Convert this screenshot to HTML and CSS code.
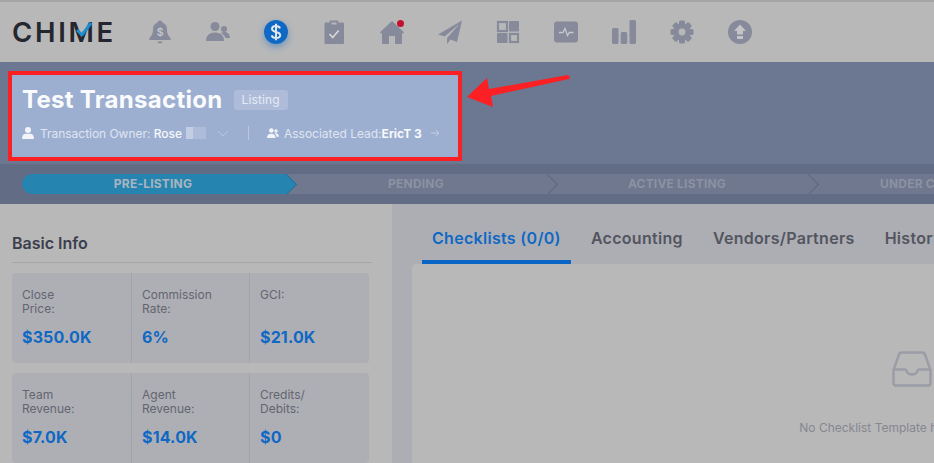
FILE: index.html
```html
<!DOCTYPE html>
<html lang="en">
<head>
    <meta charset="UTF-8">
    <meta name="viewport" content="width=device-width, initial-scale=1.0">
    <title>Test Transaction</title>
    <link rel="stylesheet" href="styles.css">
</head>
<body>
    <header class="topbar">
        <div class="logo">
            <span class="logo-text">CHIME</span>
            <svg class="logo-check" viewBox="0 0 16 14"><path d="M3 0 L8 11 L13 0z" fill="#b8b8b8"/><path d="M1 8 L6 13 L15 1" fill="none" stroke="#1c8ed0" stroke-width="3"/></svg>
        </div>
        <nav class="nav">
            <!-- bell -->
            <svg class="nav-icon" viewBox="0 0 24 24"><path d="M12 .5c-1.500 0-2.500 1-2.500 2.300C6 4 5 6.500 5 9.500c0 4.500-1.500 6.500-3.500 8.500-.8.8-.4 2 .8 2h19.400c1.200 0 1.600-1.200.8-2-2-2-3.500-4-3.500-8.500 0-3-1-5.500-4.500-6.700C14.500 1.500 13.500.5 12 .5z"/><path d="M9.500 21.500h5c0 1.200-1.100 2-2.500 2s-2.500-.8-2.500-2z"/><text x="12" y="15.500" class="bell-dollar">$</text></svg>
            <!-- people -->
            <svg class="nav-icon" viewBox="0 0 24 24"><circle cx="9" cy="6.500" r="4.500"/><path d="M0 21c0-5 3-8.500 9-8.500s9 3.500 9 8.500z"/><circle cx="18" cy="9" r="3"/><path d="M15 13c1-.6 2-.9 3.200-.9 3.300 0 5.800 2.400 5.800 5.900h-4.500c-.4-2-2.300-4-4.500-5z"/></svg>
            <!-- money, active -->
            <span class="nav-active"><svg viewBox="0 0 24 24"><circle cx="12" cy="12" r="12" fill="#0f68c4"/><path d="M16 8.300c-.6-1.500-2.100-2.200-4-2.200-2.300 0-4 1.100-4 3 0 4 8.200 1.800 8.200 5.900 0 1.900-1.800 3-4.200 3-2.200 0-3.800-.9-4.400-2.600M12 3.800v16.400" fill="none" stroke="#dfe6ee" stroke-width="2"/></svg></span>
            <!-- clipboard -->
            <svg class="nav-icon" viewBox="0 0 24 24"><path d="M3.500 2.500h4.200v-1c0-.6.400-1 1-1h6.600c.6 0 1 .4 1 1v1h4.200c1 0 1.500.6 1.500 1.500v18.500c0 1-.5 1.500-1.500 1.500h-16.500c-1 0-1.500-.5-1.500-1.500V4c0-.9.500-1.500 1.500-1.500z"/><path d="M9.500 2.500h5v2h-5z" fill="#b8b8b8"/><path d="M7.500 14l3.200 3.500 6-7" fill="none" stroke="#d6d6d8" stroke-width="1.800"/></svg>
            <!-- home -->
            <span class="nav-dot-wrap">
                <svg class="nav-icon" viewBox="0 0 24 24"><path d="M12 1 L24 12.300 L22.800 13.700 L22 13 V23 c0 .6-.4 1-1 1 h-6 v-8 h-6 v8 h-6 c-.6 0-1-.4-1-1 V13 L1.200 13.700 L0 12.300z"/></svg>
                <span class="nav-dot"></span>
            </span>
            <!-- paper plane -->
            <svg class="nav-icon" viewBox="0 0 24 24"><path d="M24 .5 L0 14.500 L6.500 16.500 L22 3.500 L9 18 L9 24 L12.500 19.500 L19 22z"/></svg>
            <!-- dashboard -->
            <svg class="nav-icon" viewBox="0 0 24 24"><rect x="2" y="2" width="9" height="9" fill="none" stroke="#868a9b" stroke-width="2.200"/><rect x="13" y="1" width="10" height="10.500" rx="1"/><rect x="1" y="13" width="10.500" height="10" rx="1"/><rect x="14" y="14" width="8" height="8" fill="none" stroke="#868a9b" stroke-width="2.200"/></svg>
            <!-- pulse -->
            <svg class="nav-icon" viewBox="0 0 24 24"><rect x="0" y="1.500" width="24" height="21" rx="3"/><path d="M5 12.500h4l2-4 2.500 7 1.800-3h4.200" fill="none" stroke="#c8c8cc" stroke-width="1.300"/></svg>
            <!-- bars -->
            <svg class="nav-icon" viewBox="0 0 24 24"><rect x="0" y="8" width="6.500" height="16" rx="1.500"/><rect x="8.700" y="12" width="6.500" height="12" rx="1.500"/><rect x="17.500" y="0" width="6.500" height="24" rx="1.500"/></svg>
            <!-- gear -->
            <svg class="nav-icon" viewBox="0 0 24 24">
                <g><rect x="9" y=".5" width="6" height="23" rx="1.500"/><rect x="9" y=".5" width="6" height="23" rx="1.500" transform="rotate(45 12 12)"/><rect x="9" y=".5" width="6" height="23" rx="1.500" transform="rotate(90 12 12)"/><rect x="9" y=".5" width="6" height="23" rx="1.500" transform="rotate(135 12 12)"/></g>
                <circle cx="12" cy="12" r="8.500"/><circle cx="12" cy="12" r="3.400" fill="#b8b8b8"/>
            </svg>
            <!-- upload -->
            <svg class="nav-icon" viewBox="0 0 24 24"><circle cx="12" cy="12" r="12"/><path d="M12 4.500 L18 11 H15 V14.500 H9 V11 H6z M9 16 H15 V19 H9z" fill="#c4c4c8"/></svg>
        </nav>
    </header>

    <section class="hero">
        <div class="highlight">
            <div class="title-row">
                <h1>Test Transaction</h1>
                <span class="badge">Listing</span>
            </div>
            <div class="meta-row">
                <svg class="meta-icon" viewBox="0 0 12 12"><circle cx="6" cy="3" r="3"/><path d="M0 12c0-3.500 1.500-5.200 3.500-5.200h5c2 0 3.500 1.700 3.500 5.200z"/></svg>
                <span class="owner">Transaction Owner: <b>Rose</b></span>
                <span class="censor"></span>
                <svg class="chevron" viewBox="0 0 12 7"><path d="M1 1l5 5 5-5" fill="none" stroke="#b9c6e0" stroke-width="1"/></svg>
                <span class="sep"></span>
                <svg class="meta-icon lead-icon" viewBox="0 0 12 10"><circle cx="4.300" cy="2.500" r="2.300"/><path d="M0 10c0-3 1.500-4.300 4.300-4.300S8.500 7 8.500 10z"/><circle cx="9" cy="3" r="1.700"/><path d="M7.500 5.500c2.500-.6 4.500.8 4.500 3.200H9.500c0-1.200-.8-2.400-2-3.200z"/></svg>
                <span class="lead">Associated Lead:<b>EricT 3</b></span>
                <svg class="go" viewBox="0 0 9 8"><path d="M0 4h8M5 1l3 3-3 3" fill="none" stroke="#c3cee4" stroke-width="1"/></svg>
            </div>
        </div>
        <div class="stages">
            <div class="stage current">PRE-LISTING</div>
            <div class="stage">PENDING</div>
            <div class="stage">ACTIVE LISTING</div>
            <div class="stage">UNDER CONTRACT</div>
        </div>
    </section>

    <svg class="arrow" viewBox="0 0 110 40"><path d="M2 27 L22 8 L24 19 L103 5 Q106 7 104 9 L26 26 L28 37z" fill="#fb2023"/></svg>

    <main class="content">
        <aside class="side">
            <h2>Basic Info</h2>
            <div class="stat-card">
                <div class="stat stat-a"><div class="stat-label">Close<br>Price:</div><div class="stat-value">$350.0K</div></div>
                <div class="stat stat-b"><div class="stat-label">Commission<br>Rate:</div><div class="stat-value">6%</div></div>
                <div class="stat stat-c"><div class="stat-label">GCI:<br>&nbsp;</div><div class="stat-value">$21.0K</div></div>
            </div>
            <div class="stat-card">
                <div class="stat stat-a"><div class="stat-label">Team<br>Revenue:</div><div class="stat-value">$7.0K</div></div>
                <div class="stat stat-b"><div class="stat-label">Agent<br>Revenue:</div><div class="stat-value">$14.0K</div></div>
                <div class="stat stat-c"><div class="stat-label">Credits/<br>Debits:</div><div class="stat-value">$0</div></div>
            </div>
        </aside>
        <section class="detail">
            <div class="tabs">
                <div class="tab active">Checklists (0/0)</div>
                <div class="tab">Accounting</div>
                <div class="tab">Vendors/Partners</div>
                <div class="tab">History</div>
            </div>
            <div class="panel">
                <svg class="inbox" viewBox="0 0 40 36"><path d="M1.500 19 L7 3.500 Q7.700 1.500 10 1.500 H30 Q32.300 1.500 33 3.500 L38.500 19 V32 Q38.500 34.500 36 34.500 H4 Q1.500 34.500 1.500 32z M1.500 18.500 H13 Q14 18.500 14.500 20 Q16 23.500 20 23.500 Q24 23.500 25.500 20 Q26 18.500 27 18.500 H38.500" fill="none" stroke="#9a9ca6" stroke-width="2.400"/></svg>
                <p class="empty">No Checklist Template has been added.</p>
            </div>
        </section>
    </main>
</body>
</html>
```

FILE: styles.css
```css
* {
    box-sizing: border-box;
}
html, body {
    margin: 0;
    height: 463px;
    overflow: hidden;
}
body {
    position: relative;
    width: 934px;
    font-family: Inter, "Liberation Sans", sans-serif;
    background: #b8b8b8;
}

/* top bar */
.topbar {
    height: 62px;
    display: flex;
    align-items: center;
    background: #b8b8b8;
    border-top: 2px solid #a5a5a5;
}
.logo {
    position: relative;
    width: 148px;
    padding-left: 12px;
    flex: none;
}
.logo-text {
    font-size: 27.5px;
    font-weight: 600;
    letter-spacing: 2.7px;
    color: #24272f;
    line-height: 30px;
    display: block;
}
.logo-check {
    position: absolute;
    left: 76px;
    top: 5px;
    width: 16px;
    height: 14px;
}
.nav {
    display: flex;
    align-items: center;
    gap: 34px;
}
.nav-icon {
    width: 24px;
    height: 24px;
    fill: #868a9b;
    display: block;
}
.bell-dollar {
    font-size: 11px;
    font-weight: 600;
    fill: #c4c4c8;
    text-anchor: middle;
}
.nav-active {
    width: 24px;
    height: 24px;
    border-radius: 50%;
    box-shadow: 0 3px 7px rgba(15, 104, 196, 0.45);
}
.nav-active svg {
    display: block;
}
.nav-dot-wrap {
    position: relative;
}
.nav-dot {
    position: absolute;
    right: 0;
    top: 0;
    width: 7px;
    height: 7px;
    border-radius: 50%;
    background: #c4112f;
}

/* header band */
.hero {
    height: 142px;
    display: flex;
    flex-direction: column;
    background: #6c7791;
}
.highlight {
    width: 454px;
    height: 90px;
    margin: 9px 0 0 8px;
    padding: 10px 10px 0 10px;
    background: #9dafd0;
    border: 4px solid #fb2023;
}
.title-row {
    display: flex;
    align-items: center;
    height: 30px;
}
h1 {
    margin: 0;
    font-size: 24px;
    line-height: 30px;
    font-weight: 700;
    letter-spacing: 0.3px;
    color: #fafbfd;
}
.badge {
    margin-left: 11px;
    height: 20px;
    padding: 0 8px;
    line-height: 20px;
    font-size: 12px;
    letter-spacing: 0.1px;
    color: #e6eaf4;
    background: #aebcd9;
    border-radius: 3px;
}
.meta-row {
    display: flex;
    align-items: center;
    margin-top: 10px;
    height: 16px;
    font-size: 12px;
    color: #dfe5f1;
    white-space: nowrap;
}
.meta-row b {
    font-weight: 500;
    color: #f6f8fb;
}
.meta-icon {
    width: 12px;
    height: 12px;
    fill: #f2f4f9;
    flex: none;
}
.owner {
    margin-left: 6px;
    letter-spacing: -0.03px;
}
.censor {
    width: 20px;
    height: 12px;
    margin-left: 4px;
    background: linear-gradient(to right, #c3cee4 35%, #aebcd9 35%);
}
.chevron {
    width: 12px;
    height: 7px;
    margin-left: 11px;
}
.sep {
    width: 1px;
    height: 14px;
    margin-left: 19px;
    background: #bcc8e0;
}
.lead-icon {
    margin-left: 18px;
    height: 10px;
}
.lead {
    margin-left: 5px;
}
.lead b {
    font-weight: 700;
}
.go {
    width: 9px;
    height: 8px;
    margin-left: 9px;
}

/* stage bar */
.stages {
    height: 40px;
    margin-top: 3px;
    padding: 10px 0 10px 22px;
    display: flex;
    background: #626c85;
}
.stage {
    flex: none;
    width: 261px;
    height: 20px;
    padding-right: 3px;
    line-height: 20px;
    position: relative;
    text-align: center;
    font-size: 12px;
    letter-spacing: 0.2px;
    font-weight: 700;
    white-space: nowrap;
    color: #8b92a3;
    background: #6f788f;
}
.stage::after {
    content: "";
    position: absolute;
    z-index: 1;
    right: -7px;
    top: 3px;
    width: 14px;
    height: 14px;
    transform: rotate(45deg);
    background: inherit;
    border-top: 1px solid #5c667f;
    border-right: 1px solid #5c667f;
}
.stage.current {
    width: 265px;
    color: #a9b4c0;
    background: #2585b0;
    border-radius: 10px 0 0 10px;
}
.stage.current::after {
    border-color: #2f6f96;
}

/* arrow callout */
.arrow {
    position: absolute;
    left: 465px;
    top: 70px;
    width: 110px;
    height: 40px;
}

/* lower part */
.content {
    display: flex;
    height: 259px;
}
.side {
    width: 392px;
    flex: none;
    padding: 0 20px 0 12px;
    background: #b8b8b8;
}
h2 {
    margin: 29px 0 10px;
    padding-bottom: 9px;
    font-size: 16px;
    line-height: 20px;
    font-weight: 600;
    color: #3b3e4c;
    border-bottom: 1px solid #a4a5ab;
}
.stat-card {
    width: 357px;
    height: 90px;
    margin-bottom: 10px;
    display: flex;
    background: #aeafb5;
    border-radius: 4px;
}
.stat {
    padding: 15px 0 0 10px;
    border-left: 1px solid #a2a3a9;
}
.stat-a {
    width: 119px;
    border-left: none;
}
.stat-b {
    width: 118px;
}
.stat-c {
    width: 120px;
}
.stat-label {
    font-size: 12px;
    line-height: 14px;
    color: #63656f;
}
.stat-value {
    margin-top: 11px;
    font-size: 16px;
    line-height: 20px;
    font-weight: 700;
    letter-spacing: 0.15px;
    color: #0f68c4;
}
.detail {
    flex: none;
    width: 1040px;
    padding: 0 0 0 20px;
    background: #adaeb4;
}
.tabs {
    height: 60px;
    margin-left: 10px;
    padding-top: 20px;
    display: flex;
    gap: 10px;
}
.tab {
    height: 40px;
    padding: 4px 10px 0;
    font-size: 16px;
    line-height: 20px;
    font-weight: 600;
    letter-spacing: 0.3px;
    color: #53555f;
    white-space: nowrap;
}
.tab.active {
    color: #0f68c4;
    border-bottom: 4px solid #0a66c4;
}
.panel {
    width: 1000px;
    height: 199px;
    padding-top: 87px;
    background: #b8b8b8;
    border-radius: 4px 0 0 0;
    text-align: center;
}
.inbox {
    display: block;
    margin: 0 auto;
    width: 40px;
    height: 36px;
}
.empty {
    margin: 33px 0 0;
    font-size: 12px;
    line-height: 16px;
    color: #868791;
}
```
